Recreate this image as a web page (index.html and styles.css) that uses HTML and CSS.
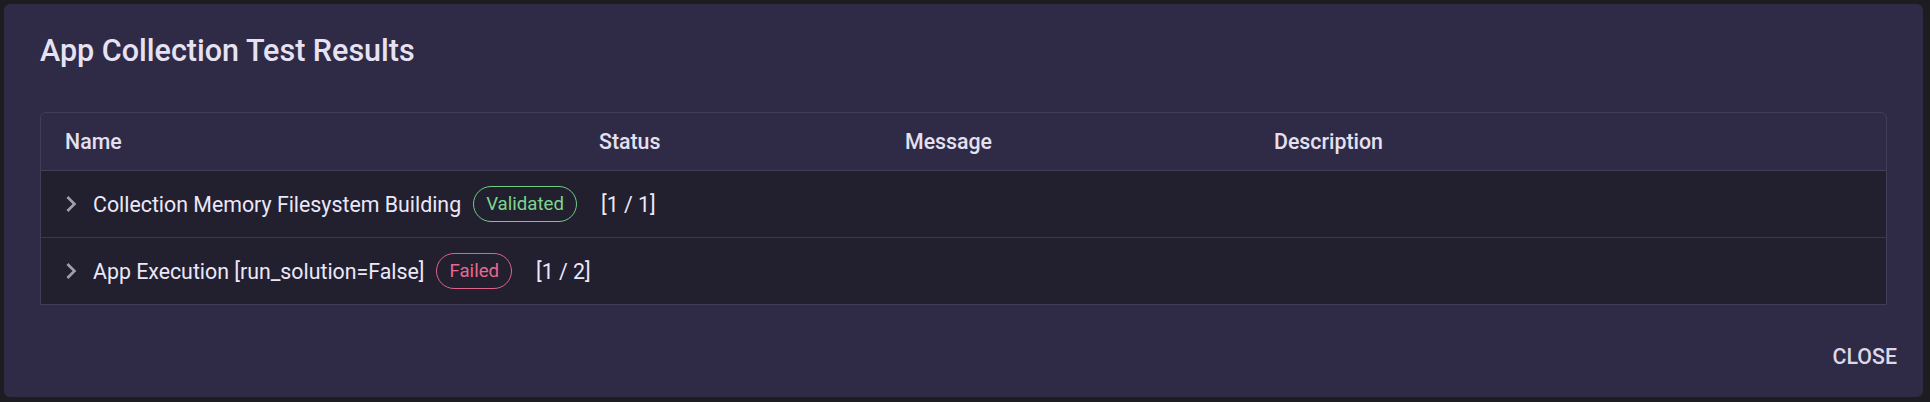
FILE: index.html
```html
<!DOCTYPE html>
<html lang="en">
<head>
<meta charset="utf-8">
<title>App Collection Test Results</title>
<link rel="stylesheet" href="styles.css">
</head>
<body>
<div class="dialog">
  <h2 class="dialog-title">App Collection Test Results</h2>
  <div class="dialog-content">
    <div class="table">
      <div class="thead">
        <div class="th">Name</div>
        <div class="th">Status</div>
        <div class="th">Message</div>
        <div class="th">Description</div>
      </div>
      <div class="row">
        <svg class="chev" viewBox="0 0 24 24"><path d="M8.59 16.59 13.17 12 8.59 7.41 10 6l6 6-6 6z"/></svg>
        <span class="name">Collection Memory Filesystem Building</span>
        <span class="chip chip-ok">Validated</span>
        <span class="count">[1 / 1]</span>
      </div>
      <div class="row">
        <svg class="chev" viewBox="0 0 24 24"><path d="M8.59 16.59 13.17 12 8.59 7.41 10 6l6 6-6 6z"/></svg>
        <span class="name">App Execution [run_solution=False]</span>
        <span class="chip chip-fail">Failed</span>
        <span class="count">[1 / 2]</span>
      </div>
    </div>
  </div>
  <div class="dialog-actions">
    <button class="btn-text">CLOSE</button>
  </div>
</div>
</body>
</html>
```
FILE: styles.css
```css
* { box-sizing: border-box; }
html, body {
  margin: 0;
  padding: 0;
  background: #1d1c21;
  font-family: Roboto, "Liberation Sans", sans-serif;
}
body {
  padding: 4px 7px 5px 4px;
  height: 402px;
}
.dialog {
  background: #2f2a45;
  border-radius: 6px;
  height: 393px;
  display: flex;
  flex-direction: column;
}
.dialog-title {
  margin: 0;
  padding: 27px 36px 0 36px;
  font-size: 30.5px;
  font-weight: 500;
  line-height: 40px;
  color: #e6e2f4;
}
.dialog-content {
  padding: 41px 36px 0 36px;
}
.table {
  border: 1px solid #423e57;
  border-radius: 6px 6px 0 0;
  overflow: hidden;
}
.thead {
  display: grid;
  grid-template-columns: 534px 306px 369px 1fr;
  height: 58px;
  align-items: center;
  border-bottom: 1px solid #423e57;
}
.th {
  padding-left: 24px;
  font-size: 21.33px;
  font-weight: 500;
  color: #e4e0f1;
}
.row {
  display: flex;
  align-items: center;
  height: 67px;
  padding-left: 14px;
  background: #221f2f;
  border-bottom: 1px solid #3a3749;
}
.row:last-child { border-bottom: none; height: 66px; }
.chev {
  width: 32px;
  height: 32px;
  fill: #a19fac;
  flex: none;
}
.name {
  margin-left: 6px;
  font-size: 21.33px;
  color: #ebe8fa;
}
.chip {
  margin-left: 12px;
  height: 36px;
  padding: 0 12px;
  border-radius: 18px;
  border: 1px solid;
  display: inline-flex;
  align-items: center;
  font-size: 18.67px;
}
.chip-ok {
  color: #7cd68e;
  border-color: #6fcf82;
}
.chip-fail {
  color: #e8698f;
  border-color: #e0648a;
}
.count {
  margin-left: 24px;
  font-size: 21.33px;
  color: #ebe8fa;
}
.dialog-actions {
  display: flex;
  justify-content: flex-end;
  padding: 25px 15px 0 0;
}
.btn-text {
  background: none;
  border: none;
  font-family: Roboto, "Liberation Sans", sans-serif;
  font-size: 21.33px;
  font-weight: 500;
  line-height: 37px;
  padding: 8px 11px;
  color: #dcd8ea;
}
```
